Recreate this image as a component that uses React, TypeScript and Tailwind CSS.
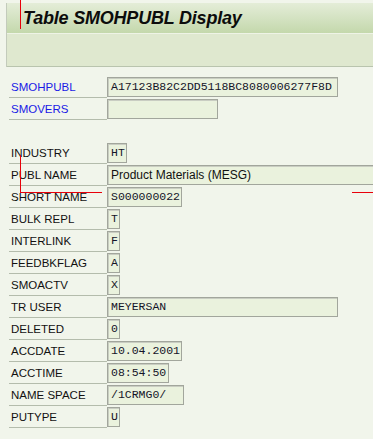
import React from "react";

type Field = {
  label: string;
  value?: string;
  width: number;
  key?: boolean;
  prop?: boolean;
  blank?: boolean;
};

const fields: Field[] = [
  { label: "SMOHPUBL", value: "A17123B82C2DD5118BC8080006277F8D", width: 231, key: true },
  { label: "SMOVERS", value: "", width: 111, key: true },
  { label: "", width: 0, blank: true },
  { label: "INDUSTRY", value: "HT", width: 20 },
  { label: "PUBL NAME", value: "Product Materials (MESG)", width: 280, prop: true },
  { label: "SHORT NAME", value: "S000000022", width: 75 },
  { label: "BULK REPL", value: "T", width: 13 },
  { label: "INTERLINK", value: "F", width: 13 },
  { label: "FEEDBKFLAG", value: "A", width: 13 },
  { label: "SMOACTV", value: "X", width: 13 },
  { label: "TR USER", value: "MEYERSAN", width: 231 },
  { label: "DELETED", value: "0", width: 13 },
  { label: "ACCDATE", value: "10.04.2001", width: 75 },
  { label: "ACCTIME", value: "08:54:50", width: 62 },
  { label: "NAME SPACE", value: "/1CRMG0/", width: 77 },
  { label: "PUTYPE", value: "U", width: 13 },
];

function Row({ f }: { f: Field }) {
  if (f.blank) return <div className="h-[22px]" />;
  return (
    <div className="flex h-[22px] items-center">
      <div
        className={`flex h-[22px] w-[98px] shrink-0 items-center border-b border-[#b4bcac] pl-[2px] pt-[2px] text-[11.5px] ${
          f.key ? "text-[#1a1ae6]" : "text-[#111]"
        }`}
      >
        {f.label}
      </div>
      <div
        className={`flex h-[20px] shrink-0 items-center border border-[#a2a69c] bg-[#eaf2dd] pl-[3px] shadow-[inset_1px_1px_0_#c9cdc2] ${
          f.prop
            ? "font-['Liberation_Sans',sans-serif] text-[12px] text-[#111]"
            : "font-['Liberation_Mono',monospace] text-[11.5px] text-[#141428]"
        }`}
        style={{ width: f.width }}
      >
        {f.value}
      </div>
    </div>
  );
}

export default function App() {
  return (
    <div className="relative h-[439px] w-[373px] overflow-hidden bg-[#f1f5eb] font-['Liberation_Sans',sans-serif]">
      <div className="ml-[6px] mt-[3px] border-l border-[#c3cbbb]">
        <div className="flex h-[30px] items-center bg-gradient-to-b from-[#e4edd8] to-[#c4d8ac] pl-[16px]">
          <span className="text-[18px] font-bold italic tracking-[-0.2px] text-[#0c0c0c]">
            Table SMOHPUBL Display
          </span>
        </div>
        <div className="h-px bg-[#eef3e6]" />
        <div className="h-[33px] border-b border-[#b9c4ae] bg-[#dfe8cf]" />
      </div>

      <div className="ml-[9px] mt-[9px] flex flex-col">
        {fields.map((f, i) => (
          <Row key={i} f={f} />
        ))}
      </div>

      {/* red guide marks drawn over the screen */}
      <div className="absolute left-[20px] top-0 h-[29px] w-px bg-[#e8000a]" />
      <div className="absolute left-[20px] top-[155px] h-[38px] w-px bg-[#e8000a]" />
      <div className="absolute left-[20px] top-[192px] h-px w-[82px] bg-[#e8000a]" />
      <div className="absolute left-[352px] top-[192px] h-px w-[21px] bg-[#e8000a]" />
    </div>
  );
}
